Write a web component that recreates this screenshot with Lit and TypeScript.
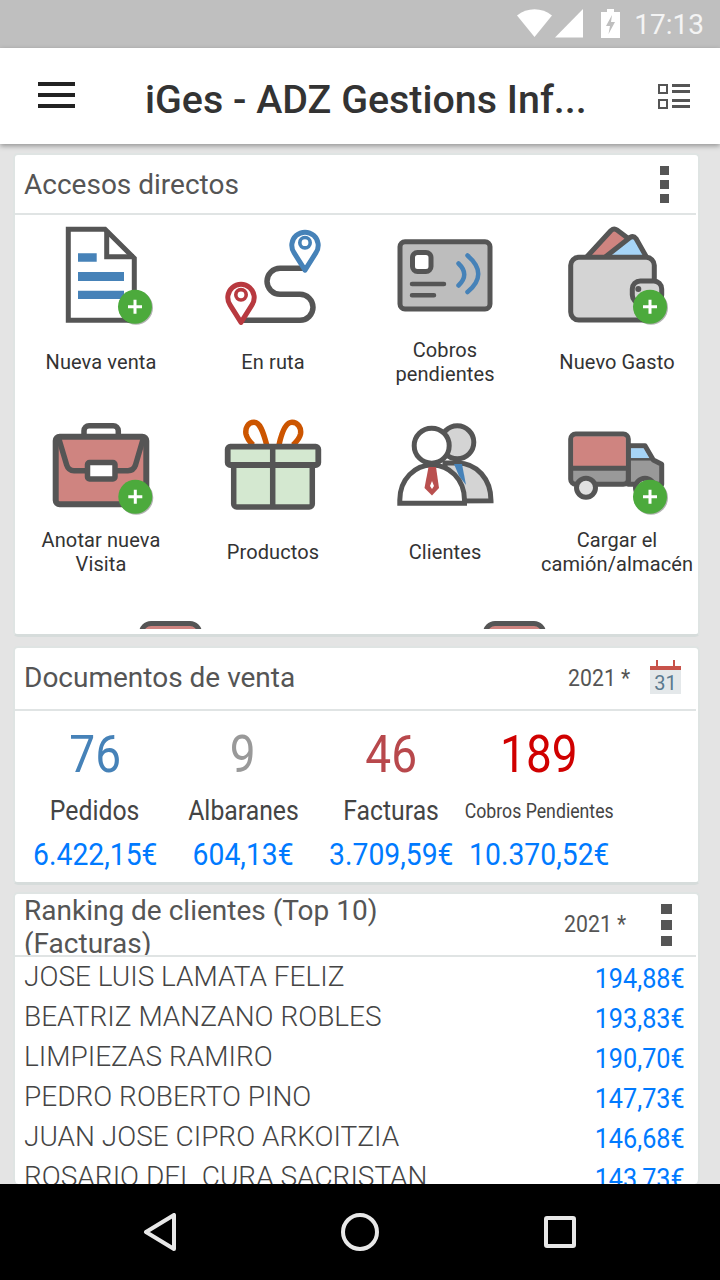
import { LitElement, html, css, svg, TemplateResult } from "lit";
import { customElement } from "lit/decorators.js";

const INK = "#555";
const PINK = "#cf8480";
const SKY = "#a6d4f7";
const BLUE = "#4682b8";
const RED = "#b8393f";

const badge = (x: number, y = 81.7) => svg`
  <circle cx=${x + 1} cy=${y + 1} r="17" fill="#000" opacity="0.3"></circle>
  <circle cx=${x} cy=${y} r="17" fill="#4caa3c"></circle>
  <path d="M${x - 7} ${y}h14M${x} ${y - 7}v14" stroke="#fff" stroke-width="3"></path>
`;

const pin = (x: number, y: number, color: string) => svg`
  <path d="M${x} ${y + 27.5}L${x - 11} ${y + 10}A13.2 13.2 0 1 1 ${x + 11} ${y + 10}Z" fill="#fff" stroke=${color} stroke-width="5" stroke-linejoin="round"></path>
  <circle cx=${x} cy=${y} r="5.2" fill="#fff" stroke=${color} stroke-width="3.6"></circle>
`;

const ICONS: Record<string, TemplateResult> = {
  doc: svg`
    <path d="M27.3 4.3H64L93.3 33.3V95.3H27.3Z" fill="#fff" stroke=${INK} stroke-width="5"></path>
    <path d="M65.7 5V31.7H93" fill="none" stroke=${INK} stroke-width="5"></path>
    <path d="M37 28.3h18.7v8.4H37ZM37 47h46v9H37ZM37 65.7h46V74H37Z" fill=${BLUE}></path>
    ${badge(94)}
  `,
  route: svg`
    <path d="M28 95.3H87A13 13 0 0 0 87 69.3H67A13 13 0 0 1 67 43.3H92" fill="none" stroke=${INK} stroke-width="5.5"></path>
    ${pin(92, 17.7, BLUE)}
    ${pin(28, 69.8, RED)}
  `,
  card: svg`
    <rect x="15" y="16.7" width="90" height="67.3" rx="5" fill="#bdbdbd" stroke=${INK} stroke-width="5"></rect>
    <rect x="27.5" y="27.5" width="18.5" height="19" rx="5" fill="#fff" stroke=${INK} stroke-width="5"></rect>
    <path d="M27 59H59M27 70.3H49" stroke=${INK} stroke-width="4.5" stroke-linecap="round" fill="none"></path>
    <path d="M73.5 38.5Q85 49.5 73.5 60.5M82.5 30.5Q104 49 82.5 67" stroke=${BLUE} stroke-width="4.5" stroke-linecap="round" fill="none"></path>
  `,
  wallet: svg`
    <path d="M29.7 32L54 5.5Q57 2.8 60 5L72 14L60 34Z" fill=${PINK} stroke=${INK} stroke-width="5" stroke-linejoin="round"></path>
    <path d="M47 33L73 12.5Q76.5 10.5 79 13.5L90 33Z" fill=${SKY} stroke=${INK} stroke-width="5" stroke-linejoin="round"></path>
    <rect x="13.7" y="32.3" width="83.6" height="62.7" rx="8" fill="#d4d4d4" stroke=${INK} stroke-width="5"></rect>
    <rect x="75.3" y="56" width="29.4" height="22" rx="8" fill="#d4d4d4" stroke=${INK} stroke-width="5"></rect>
    <circle cx="81.3" cy="64" r="3" fill=${INK}></circle>
    ${badge(93)}
  `,
  briefcase: svg`
    <rect x="43" y="10.7" width="34.3" height="16" rx="5" fill="#fff" stroke=${INK} stroke-width="5.5"></rect>
    <rect x="14.7" y="21.7" width="90.6" height="67.6" rx="4" fill=${PINK} stroke=${INK} stroke-width="6"></rect>
    <path d="M17.3 22L25.7 50Q27.5 55.7 33 55.7H87Q92.5 55.7 94.5 50L102.7 22" fill="none" stroke=${INK} stroke-width="5.5"></path>
    <rect x="46.5" y="47.5" width="27.5" height="16.5" rx="2" fill="#fff" stroke=${INK} stroke-width="5.5"></rect>
    ${badge(94.3)}
  `,
  gift: svg`
    <path d="M53.7 30C50 16 47 7.3 41 7.3C35 7.3 32 13 33 19C34 24 37 27 40 30M66 30C69 16 73 7.3 79 7.3C85 7.3 88.5 13 87.5 19C86.5 24 83 27 80 30" fill="none" stroke="#cc5500" stroke-width="5.5"></path>
    <rect x="20.7" y="48" width="78.6" height="44" rx="3" fill="#d4e8d0" stroke=${INK} stroke-width="5.5"></rect>
    <rect x="14.7" y="31.7" width="90.6" height="18.3" rx="2.5" fill="#d4e8d0" stroke=${INK} stroke-width="5.8"></rect>
    <path d="M59.7 31V92" stroke=${INK} stroke-width="5.5"></path>
  `,
  clients: svg`
    <path d="M60 86V48H72C92 48 106 64 106 85.7Z" fill="#d4d4d4" stroke=${INK} stroke-width="5"></path>
    <path d="M69 49H77L81 70L74 61Z" fill=${BLUE}></path>
    <circle cx="72.3" cy="27.3" r="16.5" fill="#d4d4d4" stroke=${INK} stroke-width="5"></circle>
    <path d="M14.8 88.3V85C14.8 64 30 50 47 50C64 50 79.5 64 79.5 85V88.3Z" fill="#fff" stroke=${INK} stroke-width="5"></path>
    <circle cx="46.7" cy="30.7" r="17.5" fill="#fff" stroke=${INK} stroke-width="5"></circle>
    <path d="M43.5 52H51L54 73L47 80.5L39.5 73Z" fill="#b9504f"></path>
    <path d="M47 66L49 71L47 74L45 71Z" fill="#fff"></path>
  `,
  truck: svg`
    <path d="M13.7 53.3H104.7V69.3H13.7Z" fill="#999"></path>
    <path d="M71.3 30.7H88L96.3 45L104.7 49.3V69.3H71.3Z" fill="#999" stroke=${INK} stroke-width="5" stroke-linejoin="round"></path>
    <path d="M73.8 33.2H86.5L93 44.3H73.8Z" fill=${SKY}></path>
    <path d="M71.3 44.3H96" stroke=${INK} stroke-width="2.5"></path>
    <rect x="13.7" y="19" width="57.6" height="50.3" rx="5" fill="#999" stroke=${INK} stroke-width="5"></rect>
    <path d="M16.2 53V24Q16.2 21.5 19 21.5H66Q68.8 21.5 68.8 24V53Z" fill=${PINK}></path>
    <path d="M13.7 53.3H71.3" stroke=${INK} stroke-width="5"></path>
    <circle cx="29" cy="72.7" r="9.5" fill="#e0e0e0" stroke=${INK} stroke-width="5"></circle>
    <circle cx="88" cy="72.7" r="9.5" fill="#e0e0e0" stroke=${INK} stroke-width="5"></circle>
    ${badge(93)}
  `,
};

const SHORTCUTS = [
  { icon: "doc", label: ["Nueva venta"] },
  { icon: "route", label: ["En ruta"] },
  { icon: "card", label: ["Cobros", "pendientes"] },
  { icon: "wallet", label: ["Nuevo Gasto"] },
  { icon: "briefcase", label: ["Anotar nueva", "Visita"] },
  { icon: "gift", label: ["Productos"] },
  { icon: "clients", label: ["Clientes"] },
  { icon: "truck", label: ["Cargar el", "camión/almacén"] },
];

const STATS = [
  { n: "76", label: "Pedidos", amount: "6.422,15€", color: "#4682b8", small: false },
  { n: "9", label: "Albaranes", amount: "604,13€", color: "#999", small: false },
  { n: "46", label: "Facturas", amount: "3.709,59€", color: "#b8484c", small: false },
  { n: "189", label: "Cobros Pendientes", amount: "10.370,52€", color: "#d00000", small: true },
];

const RANKING = [
  ["JOSE LUIS LAMATA FELIZ", "194,88€"],
  ["BEATRIZ MANZANO ROBLES", "193,83€"],
  ["LIMPIEZAS RAMIRO", "190,70€"],
  ["PEDRO ROBERTO PINO", "147,73€"],
  ["JUAN JOSE CIPRO ARKOITZIA", "146,68€"],
  ["ROSARIO DEL CURA SACRISTAN", "143,73€"],
];

@customElement("app-root")
export class AppRoot extends LitElement {
  static styles = css`
    :host {
      display: flex;
      flex-direction: column;
      width: 720px;
      height: 1280px;
      overflow: hidden;
      background: #e4e4e4;
      font-family: Roboto, "Liberation Sans", sans-serif;
      color: #555;
    }

    .status {
      flex: none;
      height: 48px;
      background: #bfbfbf;
      display: flex;
      align-items: center;
      justify-content: flex-end;
      padding-right: 16px;
      color: #f4f4f4;
      font-size: 28px;
    }
    .status svg {
      display: block;
    }
    .status .batt {
      margin-left: 17px;
    }
    .status .time {
      margin-left: 13px;
    }

    .appbar {
      flex: none;
      height: 96px;
      background: #fff;
      display: flex;
      align-items: center;
      box-shadow: 0 2px 5px rgba(0, 0, 0, 0.35);
      position: relative;
      z-index: 1;
      padding: 0 30px 0 38px;
      box-sizing: border-box;
    }
    .appbar .burger {
      margin-bottom: 2px;
    }
    .appbar h1 {
      flex: 1;
      margin: 6px 0 0 70px;
      font-size: 39.4px;
      font-weight: 500;
      color: #333;
      white-space: nowrap;
    }

    .content {
      flex: 1;
      min-height: 0;
      overflow: hidden;
      padding: 9px 20px 0 13px;
      display: flex;
      flex-direction: column;
    }

    .panel {
      flex: none;
      background: #fff;
      border: 2px solid #dfe4e3;
      border-bottom: 3px solid #d6dcdb;
      border-radius: 5px;
      box-sizing: border-box;
      overflow: hidden;
    }
    .panel.shortcuts {
      height: 484px;
      margin-bottom: 9px;
    }
    .panel.docs {
      height: 239px;
      margin-bottom: 7px;
    }
    .panel.ranking {
      flex: 1;
      border-bottom: 0;
    }

    .head {
      display: flex;
      align-items: center;
      margin-right: 2px;
      padding-left: 9px;
      border-bottom: 2px solid #e0e4e4;
      box-sizing: border-box;
      font-size: 28px;
    }
    .shortcuts .head {
      height: 60px;
    }
    .docs .head {
      height: 63px;
      padding-bottom: 2px;
    }
    .ranking .head {
      height: 63px;
      overflow: hidden;
      line-height: 33px;
    }
    .head .title {
      flex: 1;
    }
    .ranking .title {
      max-width: 400px;
      flex: none;
      margin: 4px auto 0 0;
    }
    .cond {
      display: inline-block;
      transform: scaleX(0.885);
    }
    .year {
      font-size: 24px;
      margin-right: 20px;
      white-space: nowrap;
      transform-origin: right center;
    }
    .ranking .year {
      margin-right: 35px;
    }
    .dots {
      display: flex;
      flex-direction: column;
      gap: 5px;
      margin-right: 27px;
    }
    .dots i {
      display: block;
      width: 9px;
      height: 9px;
      background: #555;
    }
    .ranking .dots {
      gap: 6px;
      margin-right: 24px;
    }
    .ranking .dots i {
      width: 11px;
      height: 10px;
    }
    .cal {
      display: block;
      margin: 0 15px 2px 0;
    }

    .grid {
      display: grid;
      grid-template-columns: repeat(4, 172px);
      height: 414px;
      overflow: hidden;
    }
    .tile {
      height: 190px;
      padding-top: 10px;
      box-sizing: border-box;
      display: flex;
      flex-direction: column;
      align-items: center;
    }
    .tile svg {
      display: block;
      flex: none;
    }
    .tile .label {
      height: 74px;
      display: flex;
      flex-direction: column;
      justify-content: center;
      align-items: center;
      font-size: 20px;
      letter-spacing: 0.1px;
      line-height: 24px;
      color: #333;
      white-space: nowrap;
    }
    .peek {
      grid-column: 1 / -1;
      display: flex;
      gap: 281px;
      padding: 26px 0 0 124px;
    }
    .peek i {
      display: block;
      width: 63px;
      height: 40px;
      box-sizing: border-box;
      background: #cf8480;
      border: 5px solid #555;
      border-radius: 12px;
    }

    .stats {
      display: grid;
      grid-template-columns: repeat(4, 148px);
      margin-left: 6px;
      padding-top: 16px;
      white-space: nowrap;
    }
    .stats .cell {
      display: flex;
      flex-direction: column;
      align-items: center;
    }
    .stats .n {
      font-size: 52px;
      line-height: 56px;
    }
    .stats .lbl {
      margin-top: 8px;
      height: 40px;
      line-height: 40px;
      font-size: 28px;
      color: #444;
    }
    .stats .lbl.small {
      font-size: 20px;
    }
    .stats .amt {
      margin-top: 3px;
      font-size: 32px;
      line-height: 40px;
      color: #007aff;
    }

    .row {
      display: flex;
      justify-content: space-between;
      height: 40px;
      padding: 0 13px 0 9px;
      font-size: 28px;
      font-weight: 300;
      line-height: 40px;
      color: #444;
      white-space: nowrap;
    }
    .row .val {
      font-size: 28.5px;
      font-weight: 400;
      color: #007aff;
      position: relative;
      top: 2px;
      transform-origin: right center;
    }

    .nav {
      flex: none;
      height: 96px;
      background: #000;
      display: flex;
      align-items: center;
      padding-left: 143px;
    }
    .nav svg {
      display: block;
    }
    .nav .home {
      margin: 0 165px 0 164px;
    }
  `;

  private renderTile(t: { icon: string; label: string[] }) {
    return html`
      <div class="tile">
        <svg width="120" height="100" viewBox="0 0 120 100">${ICONS[t.icon]}</svg>
        <div class="label">${t.label.map((l) => html`<span>${l}</span>`)}</div>
      </div>
    `;
  }

  private dots() {
    return html`<div class="dots"><i></i><i></i><i></i></div>`;
  }

  protected render() {
    return html`
      <div class="status">
        <svg width="67" height="30" viewBox="0 0 67 30">
          <path d="M0 6.5C10 -2 25 -2 35 6.5L17.5 28Z" fill="#fff"></path>
          <path d="M38 28.5L66 0V28.5Z" fill="#fff"></path>
        </svg>
        <svg class="batt" width="20" height="30" viewBox="0 0 20 30">
          <path d="M0 3H6V0H13V3H19V29H0Z" fill="#fff"></path>
          <path d="M11 6L5 17H9L7.5 25L14 13H10Z" fill="#bfbfbf"></path>
        </svg>
        <span class="time">17:13</span>
      </div>

      <header class="appbar">
        <svg class="burger" width="37" height="26" viewBox="0 0 37 26">
          <path d="M0 2H37M0 13H37M0 24H37" stroke="#222" stroke-width="4"></path>
        </svg>
        <h1>iGes - ADZ Gestions Inf...</h1>
        <svg width="32" height="26" viewBox="0 0 32 26" fill="none" stroke="#555">
          <rect x="1" y="2" width="8" height="8" stroke-width="2"></rect>
          <rect x="1" y="17" width="8" height="8" stroke-width="2"></rect>
          <path d="M14 2.5H32M14 8.5H32M14 17.5H32M14 23.5H32" stroke-width="3"></path>
        </svg>
      </header>

      <main class="content">
        <section class="panel shortcuts">
          <div class="head"><span class="title">Accesos directos</span>${this.dots()}</div>
          <div class="grid">
            ${SHORTCUTS.map((s) => this.renderTile(s))}
            <div class="peek"><i></i><i></i></div>
          </div>
        </section>

        <section class="panel docs">
          <div class="head">
            <span class="title">Documentos de venta</span>
            <span class="year cond">2021 *</span>
            <svg class="cal" width="31" height="34" viewBox="0 0 31 34">
              <rect x="0" y="9" width="31" height="25" fill="#e4e8ea"></rect>
              <path d="M0 6H31V10H0ZM6 0H8V6H6ZM23 0H25V6H23Z" fill="#c8524a"></path>
              <text x="15.5" y="30" text-anchor="middle" font-size="20" fill="#5b7a8f">31</text>
            </svg>
          </div>
          <div class="stats">
            ${STATS.map(
              (s) => html`
                <div class="cell">
                  <div class="n cond" style="color:${s.color}">${s.n}</div>
                  <div class="lbl cond ${s.small ? "small" : ""}">${s.label}</div>
                  <div class="amt cond">${s.amount}</div>
                </div>
              `
            )}
          </div>
        </section>

        <section class="panel ranking">
          <div class="head">
            <span class="title">Ranking de clientes (Top 10) (Facturas)</span>
            <span class="year cond">2021 *</span>
            ${this.dots()}
          </div>
          ${RANKING.map(
            ([name, val]) => html`
              <div class="row"><span>${name}</span><span class="val cond">${val}</span></div>
            `
          )}
        </section>
      </main>

      <nav class="nav">
        <svg width="34" height="38" viewBox="0 0 34 38" fill="none" stroke="#e8e8e8" stroke-width="4" stroke-linejoin="round">
          <path d="M31 2V36L3 19Z"></path>
        </svg>
        <svg class="home" width="38" height="38" viewBox="0 0 38 38" fill="none" stroke="#e8e8e8" stroke-width="4">
          <circle cx="19" cy="19" r="17"></circle>
        </svg>
        <svg width="32" height="32" viewBox="0 0 32 32" fill="none" stroke="#e8e8e8" stroke-width="4">
          <rect x="2" y="2" width="28" height="28" rx="1"></rect>
        </svg>
      </nav>
    `;
  }
}
